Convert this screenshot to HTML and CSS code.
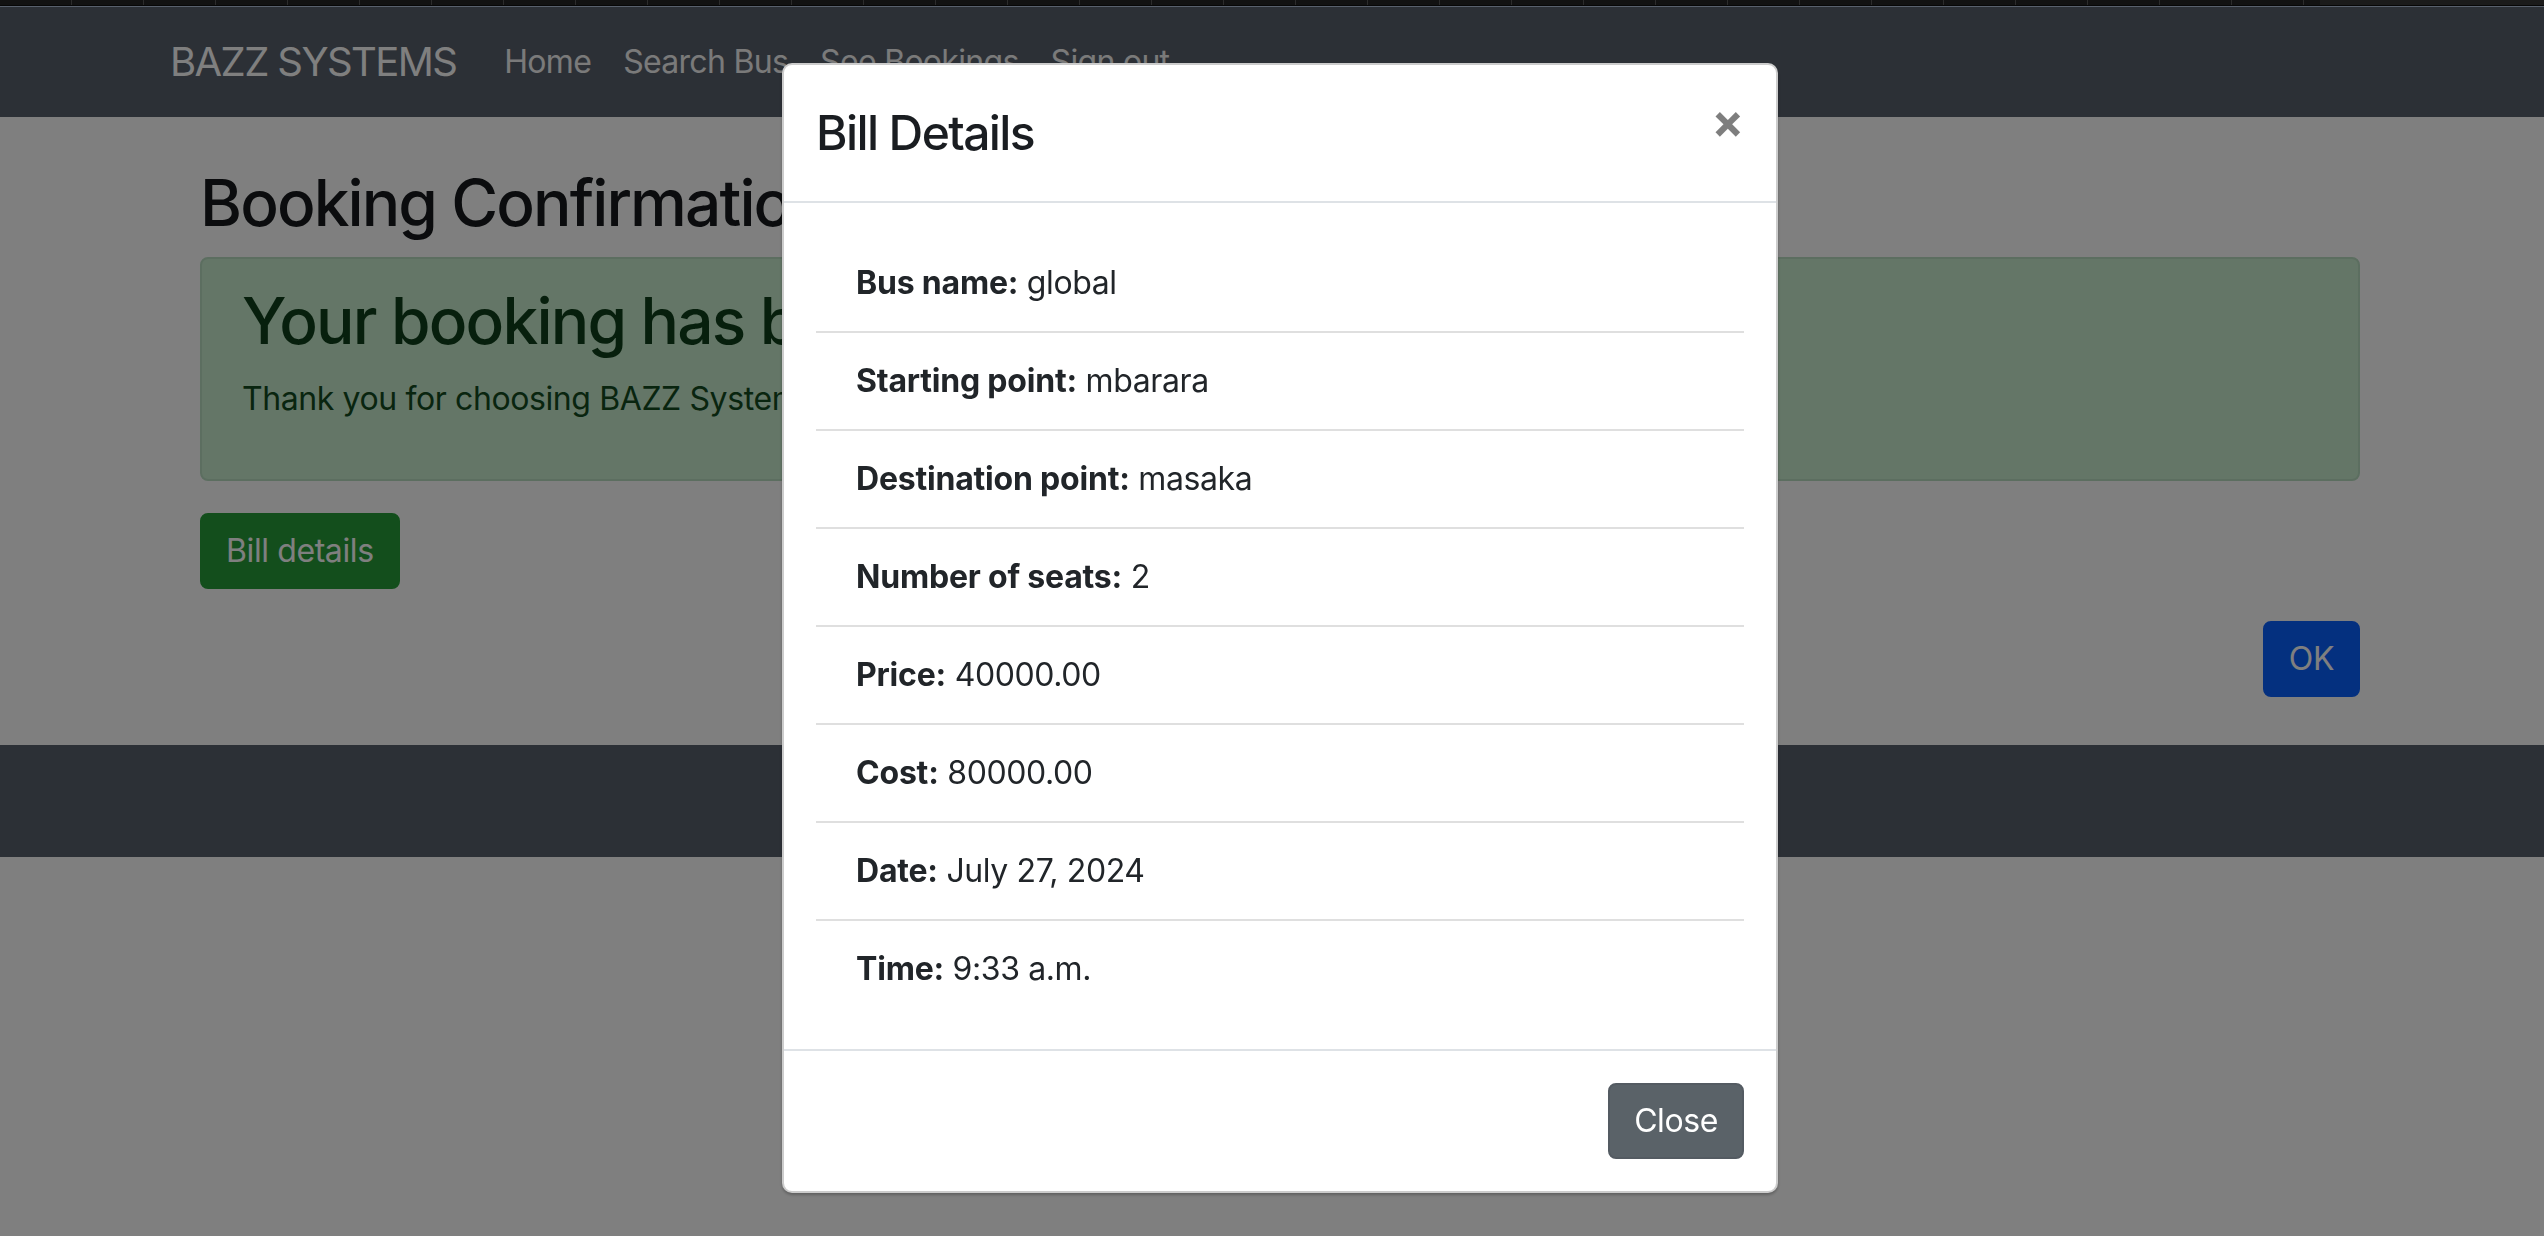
FILE: index.html
```html
<!DOCTYPE html>
<html lang="en">
<head>
<meta charset="utf-8">
<title>Booking Confirmation - BAZZ SYSTEMS</title>
<link rel="stylesheet" href="styles.css">
</head>
<body>
<div class="tabstrip"><div class="tabs"></div><div class="tabs-rest"></div></div>
<div class="page">
  <nav class="navbar">
    <div class="container nav-inner">
      <a class="brand" href="#">BAZZ SYSTEMS</a>
      <ul class="nav">
        <li><a class="nav-link" href="#">Home</a></li>
        <li><a class="nav-link" href="#">Search Bus</a></li>
        <li><a class="nav-link" href="#">See Bookings</a></li>
        <li><a class="nav-link" href="#">Sign out</a></li>
      </ul>
    </div>
  </nav>
  <main class="main">
    <h2 class="page-title">Booking Confirmation</h2>
    <div class="alert">
      <h2 class="alert-heading">Your booking has been confirmed!</h2>
      <p class="alert-text">Thank you for choosing BAZZ Systems.</p>
    </div>
    <div class="btn-row">
      <button class="btn btn-success" type="button">Bill details</button>
    </div>
    <div class="btn-row btn-row-end">
      <button class="btn btn-primary" type="button">OK</button>
    </div>
  </main>
  <footer class="footer"></footer>
</div>
<div class="backdrop"></div>
<div class="modal">
  <div class="modal-content">
    <div class="modal-header">
      <h4 class="modal-title">Bill Details</h4>
      <button class="close" type="button" aria-label="Close">&times;</button>
    </div>
    <div class="modal-body">
      <ul class="list-group">
        <li class="list-item"><strong>Bus name:</strong> global</li>
        <li class="list-item"><strong>Starting point:</strong> mbarara</li>
        <li class="list-item"><strong>Destination point:</strong> masaka</li>
        <li class="list-item"><strong>Number of seats:</strong> 2</li>
        <li class="list-item"><strong>Price:</strong> 40000.00</li>
        <li class="list-item"><strong>Cost:</strong> 80000.00</li>
        <li class="list-item"><strong>Date:</strong> July 27, 2024</li>
        <li class="list-item"><strong>Time:</strong> 9:33 a.m.</li>
      </ul>
    </div>
    <div class="modal-footer">
      <button class="btn btn-secondary" type="button">Close</button>
    </div>
  </div>
</div>
</body>
</html>
```

FILE: styles.css
```css
* { box-sizing: border-box; }

html, body {
  margin: 0;
  padding: 0;
  overflow: hidden;
  background: #ffffff;
}

body {
  font-family: Inter, "Liberation Sans", sans-serif;
  font-size: 32px;
  line-height: 1.5;
  letter-spacing: -0.4px;
  color: #212529;
  width: 2544px;
  height: 1236px;
}

/* window tab strip at the very top */
.tabstrip {
  display: flex;
  height: 6px;
  background: #121212;
  border-bottom: 1px solid #070707;
}
.tabs {
  width: 2320px;
  background: repeating-linear-gradient(to right, #121212 0 71px, #2c2c2c 71px 72px);
}
.tabs-rest {
  flex: 1;
  background: #1b1b1b;
}

.page {
  width: 2560px;
}

/* navbar */
.navbar {
  background: #58606c;
  height: 111px;
  display: flex;
  align-items: center;
}
.container {
  width: 2280px;
  margin: 0 auto;
  padding: 0 30px;
}
.nav-inner {
  display: flex;
  align-items: center;
}
.brand {
  font-size: 40px;
  line-height: 60px;
  letter-spacing: -1.6px;
  color: #ffffff;
  text-decoration: none;
  margin-right: 32px;
}
.nav {
  display: flex;
  list-style: none;
  margin: 0;
  padding: 0;
}
.nav-link {
  display: block;
  padding: 0 16px;
  letter-spacing: -0.7px;
  color: #f4f4f4;
  text-decoration: none;
}

/* main content */
.main {
  width: 2160px;
  margin: 0 auto;
  padding: 48px 0;
}
.page-title {
  font-size: 64px;
  line-height: 76px;
  font-weight: 500;
  letter-spacing: -1.9px;
  margin: 0 0 16px;
  color: #16191c;
}
.alert {
  background: #c8ecce;
  border: 2px solid #b8dcc0;
  border-radius: 8px;
  padding: 24px 40px;
  margin-bottom: 32px;
  color: #124a1f;
}
.alert-heading {
  font-size: 64px;
  line-height: 76px;
  font-weight: 500;
  letter-spacing: -1.8px;
  margin: 0 0 16px;
  color: #0f3f1a;
}
.alert-text {
  margin: 0 0 32px;
}

.btn-row {
  display: flex;
}
.btn-row-end {
  justify-content: flex-end;
  margin-top: 32px;
}
.btn {
  font-family: inherit;
  font-size: 32px;
  line-height: 48px;
  letter-spacing: -0.4px;
  padding: 12px 24px;
  border: 2px solid transparent;
  border-radius: 8px;
  color: #ffffff;
  cursor: pointer;
}
.btn-success {
  background: #269d38;
  border-color: #269d38;
}
.btn-primary {
  background: #0860fe;
  border-color: #0860fe;
}
.btn-secondary {
  background: #5a6268;
  border-color: #545b62;
}

.footer {
  background: #58606c;
  height: 112px;
}

/* modal */
.backdrop {
  position: fixed;
  left: 0;
  right: 0;
  top: 7px;
  bottom: 0;
  background: rgba(0, 0, 0, 0.5);
}
.modal {
  position: fixed;
  inset: 0;
  padding-left: 16px;
}
.modal-content {
  width: 996px;
  margin: 63px auto 0;
  background: #ffffff;
  border: 2px solid rgba(0, 0, 0, 0.2);
  border-radius: 10px;
  box-shadow: 0 2px 3px rgba(0, 0, 0, 0.25);
}
.modal-header {
  display: flex;
  align-items: flex-start;
  padding: 32px;
  border-bottom: 2px solid #dee2e6;
}
.modal-title {
  margin: 0;
  font-size: 48px;
  line-height: 72px;
  font-weight: 500;
  letter-spacing: -1.6px;
  color: #1a1d21;
}
.close {
  margin: -32px -32px -32px auto;
  padding: 32px;
  background: transparent;
  border: 0;
  font-family: inherit;
  font-size: 48px;
  font-weight: 700;
  line-height: 1;
  color: #000000;
  opacity: 0.5;
  cursor: pointer;
}
.modal-body {
  padding: 32px;
}
.list-group {
  list-style: none;
  margin: 0;
  padding: 0;
}
.list-item {
  padding: 24px 40px;
  border-bottom: 2px solid rgba(0, 0, 0, 0.125);
}
.list-item:last-child {
  border-bottom: 0;
}
.list-item strong {
  font-weight: 700;
  letter-spacing: -0.2px;
}
.modal-footer {
  display: flex;
  justify-content: flex-end;
  padding: 24px;
  border-top: 2px solid #dee2e6;
}
.modal-footer .btn {
  margin: 8px;
}
```
